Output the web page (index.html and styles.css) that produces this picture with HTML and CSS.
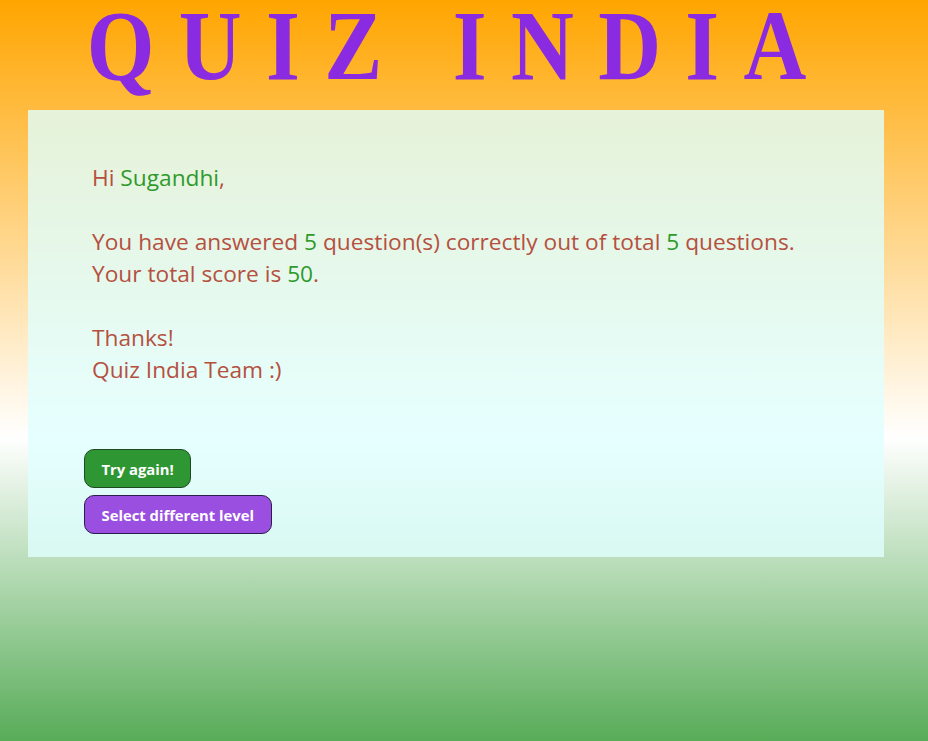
FILE: index.html
```html
<!DOCTYPE html>
<html>
<head>
<meta charset="utf-8">
<link rel="stylesheet" href="styles.css">
</head>
<body>
<h1 class="title">QUIZ INDIA</h1>
<div class="card">
  <div class="message">
    <p>Hi <span class="hl">Sugandhi</span>,</p>
    <p>You have answered <span class="hl">5</span> question(s) correctly out of total <span class="hl">5</span> questions.<br>Your total score is <span class="hl">50</span>.</p>
    <p>Thanks!<br>Quiz India Team :)</p>
  </div>
  <div class="actions">
    <button class="btn btn-green">Try again!</button>
    <button class="btn btn-purple">Select different level</button>
  </div>
</div>
</body>
</html>
```

FILE: styles.css
```css
html, body {
  margin: 0;
  padding: 0;
}
body {
  min-height: 741px;
  background: linear-gradient(to bottom, #ffa500 0%, #ffffff 59%, #58ac58 100%);
  font-family: "Open Sans", "Noto Sans", sans-serif;
}
.title {
  margin: 0;
  height: 110px;
  padding-right: 12px;
  text-align: center;
  font-family: "Liberation Serif", serif;
  font-weight: bold;
  font-size: 100px;
  line-height: 100px;
  letter-spacing: 28px;
  color: #8a2be2;
  white-space: nowrap;
  transform: translateY(-4px) scaleX(0.87);
}
.card {
  margin: 0 44px 0 28px;
  background: rgba(224, 255, 255, 0.8);
  padding: 52px 56px 22px 56px;
  height: 373px;
}
.message {
  padding-left: 8px;
  color: #b5503f;
  font-size: 22.7px;
  line-height: 32px;
}
.message p {
  margin: 0 0 32px 0;
}
.hl {
  color: #2f9a2b;
}
.actions {
  margin-top: 63px;
  display: flex;
  flex-direction: column;
  align-items: flex-start;
  gap: 7px;
}
.btn {
  font-family: "Open Sans", "Noto Sans", sans-serif;
  font-weight: bold;
  font-size: 14.8px;
  color: #ffffff;
  border: 1px solid #2a2a40;
  border-radius: 10px;
  padding: 0 16.5px;
  height: 39px;
}
.btn-green {
  background: #2e9632;
  border-color: #1f4a22;
}
.btn-purple {
  background: #9a4fe0;
  border-color: #2a1f4a;
}
```
